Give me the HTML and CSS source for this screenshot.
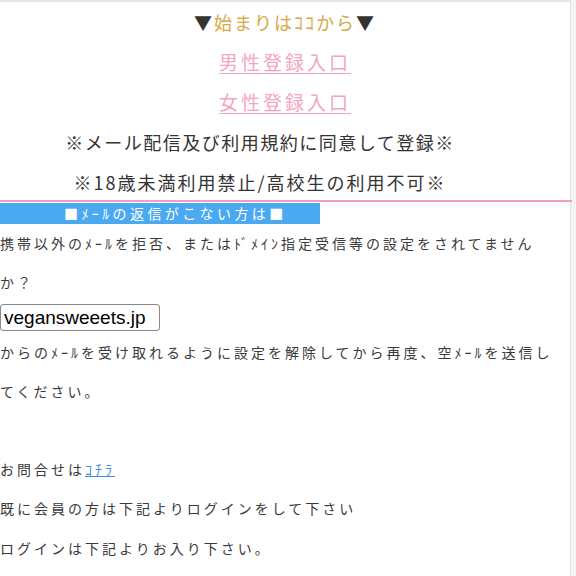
FILE: index.html
```html
<!DOCTYPE html>
<html lang="ja">
<head>
<meta charset="utf-8">
<link rel="stylesheet" href="styles.css">
</head>
<body>
<div class="page">
  <div class="heads">
    <p class="start"><span class="tri">▼</span>始まりはｺｺから<span class="tri">▼</span></p>
    <p class="entry"><a href="#">男性登録入口</a></p>
    <p class="entry"><a href="#">女性登録入口</a></p>
    <p class="note note-a">※メール配信及び利用規約に同意して登録※</p>
    <p class="note">※18歳未満利用禁止/高校生の利用不可※</p>
  </div>
  <div class="rule"></div>
  <div class="bar">■ﾒｰﾙの返信がこない方は■</div>
  <div class="body">
    <p>携帯以外のﾒｰﾙを拒否、またはﾄﾞﾒｲﾝ指定受信等の設定をされてませんか？</p>
    <div class="domain">vegansweeets.jp</div>
    <p>からのﾒｰﾙを受け取れるように設定を解除してから再度、空ﾒｰﾙを送信してください。</p>
    <p class="lower">&nbsp;</p>
    <p class="lower">お問合せは<a class="link" href="#">ｺﾁﾗ</a></p>
    <p class="lower">既に会員の方は下記よりログインをして下さい</p>
    <p class="lower">ログインは下記よりお入り下さい。</p>
  </div>
</div>
</body>
</html>
```
FILE: styles.css
```css
html, body {
  margin: 0;
  padding: 0;
  background: #f4f4f4;
}
body {
  font-family: "Noto Sans CJK JP", "Noto Sans", sans-serif;
  color: #333;
}
.page {
  width: 570px;
  min-height: 576px;
  background: #fff;
  border-top: 2px solid #e6e6e6;
  border-right: 1px solid #e2e2e2;
}
p { margin: 0; }
.heads {
  text-align: center;
}
.heads p {
  line-height: 40px;
  height: 40px;
}
.start {
  font-size: 18px;
  letter-spacing: 2px;
  color: #d6a944;
}
.tri { color: #333; }
.entry {
  font-size: 19px;
  letter-spacing: 3px;
}
.entry a {
  color: #f4a6c0;
  text-decoration: underline;
  text-underline-offset: 3px;
}
.note {
  font-size: 18px;
  letter-spacing: 2px;
  color: #333;
  padding-right: 50px;
}
.note-a {
  letter-spacing: 1.5px;
}
.rule {
  height: 2px;
  margin-top: -2px;
  width: 572px;
  background: #f09ec9;
}
.bar {
  width: 256px;
  margin-top: 1px;
  padding-left: 64px;
  height: 21px;
  line-height: 21px;
  background: #4aa9ef;
  color: #fff;
  font-size: 14px;
  letter-spacing: 3.4px;
}
.body {
  width: 562px;
  font-size: 14px;
  letter-spacing: 3px;
  color: #3a3a3a;
}
.body p {
  line-height: 38.5px;
}
.body p.lower {
  line-height: 39.5px;
}
.domain {
  display: inline-block;
  margin: 3px 0 2px;
  padding: 0 4px 0 3px;
  border: 1px solid #888;
  border-radius: 3px;
  font-family: "Liberation Sans", Arial, sans-serif;
  font-size: 19px;
  letter-spacing: 0;
  line-height: 25px;
  color: #000;
  width: 151px;
}
.link {
  color: #3b8de0;
  text-decoration: underline;
}
```
